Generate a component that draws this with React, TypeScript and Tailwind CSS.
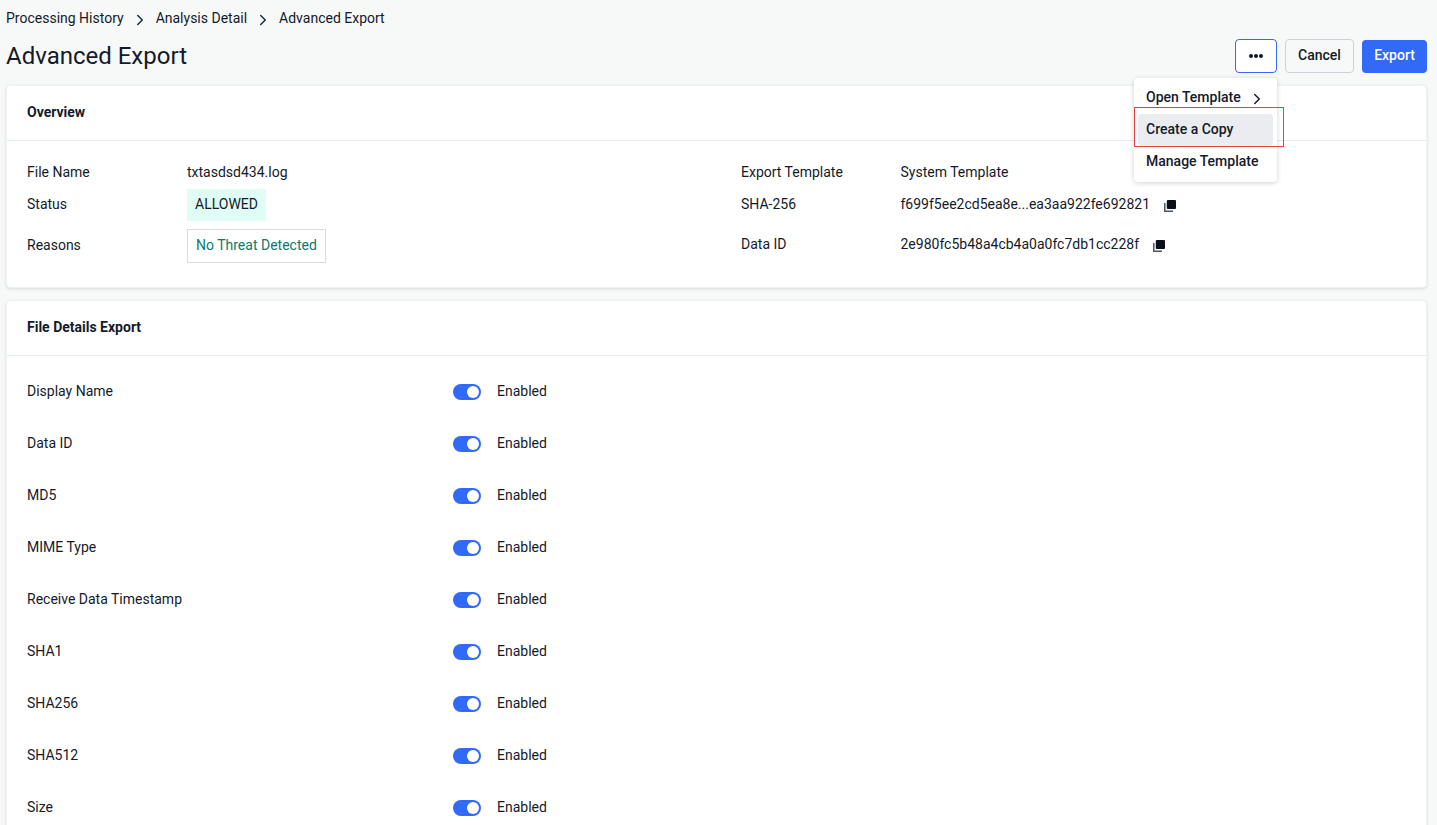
import { ChevronRight } from "lucide-react"

const fields = ["Display Name", "Data ID", "MD5", "MIME Type", "Receive Data Timestamp", "SHA1", "SHA256", "SHA512", "Size"]

function CopyIcon() {
  return (
    <svg width="12" height="12" viewBox="0 0 12 12" className="shrink-0">
      <path d="M0.8 3v8.2H9" fill="none" stroke="#4b5563" strokeWidth="1.5" />
      <rect x="2.8" y="0" width="9.2" height="9" rx="1" fill="#0b0f1a" />
    </svg>
  )
}

function Crumb({ label }: { label: string }) {
  return (
    <>
      <span>{label}</span>
      <ChevronRight size={18} strokeWidth={2} className="mx-[7px] mt-[4px] text-[#1f2937]" />
    </>
  )
}

export default function App() {
  return (
    <div className="relative h-[825px] w-[1437px] overflow-hidden bg-[#f7f9f9] pl-[6px] pr-[10px] text-sm text-[#141a29] [font-family:Roboto,sans-serif]">
      <div className="flex h-[36px] items-center">
        <Crumb label="Processing History" />
        <Crumb label="Analysis Detail" />
        <span>Advanced Export</span>
      </div>

      <div className="flex h-[40px] items-center justify-between">
        <h1 className="text-2xl font-normal">Advanced Export</h1>
        <div className="flex items-center gap-2">
          <button className="flex h-[34px] w-[42px] items-center justify-center rounded border border-[#3269f6] bg-white">
            <span className="flex gap-[1px]">
              <span className="h-[4px] w-[4px] rounded-full bg-[#141a29]" />
              <span className="h-[4px] w-[4px] rounded-full bg-[#141a29]" />
              <span className="h-[4px] w-[4px] rounded-full bg-[#141a29]" />
            </span>
          </button>
          <button className="h-[34px] w-[69px] rounded border border-[#ccd0da] pb-[2px] font-medium">Cancel</button>
          <button className="h-[33px] w-[65px] rounded bg-[#3269f6] pb-[2px] font-medium text-white">Export</button>
        </div>
      </div>

      <section className="mt-[9px] h-[203px] rounded border border-[#eef0f1] bg-white shadow-[0_1px_3px_rgba(20,26,41,0.14)]">
        <div className="flex h-[55px] items-center border-b border-[#e8eaee] px-[20px] pb-[3px] font-bold">Overview</div>
        <div className="flex pl-[20px] pt-[15px]">
          <div className="w-[714px]">
            <div className="flex h-[32px] items-center">
              <span className="w-[160px]">File Name</span>
              <span>txtasdsd434.log</span>
            </div>
            <div className="mt-[1px] flex h-[32px] items-center">
              <span className="mb-[2px] w-[160px]">Status</span>
              <span className="flex h-[32px] items-center bg-[#e0fdf5] px-2 pb-[2px]">ALLOWED</span>
            </div>
            <div className="mt-[8px] flex h-[34px] items-center">
              <span className="mb-[2px] w-[160px]">Reasons</span>
              <span className="flex h-[34px] items-center border border-[#d9dbe0] px-2 pb-[2px] text-[#0d7a6b]">No Threat Detected</span>
            </div>
          </div>
          <div>
            <div className="flex h-[32px] items-center">
              <span className="w-[159.5px]">Export Template</span>
              <span>System Template</span>
            </div>
            <div className="flex h-[32px] items-center">
              <span className="w-[159.5px]">SHA-256</span>
              <span>f699f5ee2cd5ea8e...ea3aa922fe692821</span>
              <span className="ml-[14px] mt-[4px]"><CopyIcon /></span>
            </div>
            <div className="mt-[8px] flex h-[32px] items-center">
              <span className="w-[159.5px]">Data ID</span>
              <span>2e980fc5b48a4cb4a0a0fc7db1cc228f</span>
              <span className="ml-[14px] mt-[3px]"><CopyIcon /></span>
            </div>
          </div>
        </div>
      </section>

      <section className="mt-[12px] rounded border border-[#eef0f1] bg-white pb-[40px] shadow-[0_1px_3px_rgba(20,26,41,0.14)]">
        <div className="flex h-[55px] items-center border-b border-[#e8eaee] px-[20px] pb-[3px] font-bold">File Details Export</div>
        <div className="pl-[20px] pt-[9px]">
          {fields.map((name) => (
            <div key={name} className="flex h-[52px] items-center">
              <span className="w-[426px]">{name}</span>
              <span className="relative mt-[2px] h-[16px] w-[28px] rounded-full bg-[#3269f6]">
                <span className="absolute right-[2px] top-[2px] h-[12px] w-[12px] rounded-full bg-white" />
              </span>
              <span className="ml-[16px]">Enabled</span>
            </div>
          ))}
        </div>
      </section>

      <div className="absolute left-[1134px] top-[78px] z-10 w-[143px] rounded bg-white p-[4px] font-medium shadow-[0_1px_5px_rgba(20,26,41,0.2)]">
        <div className="flex h-[32px] items-center whitespace-nowrap px-2 pb-[2px]">
          <span>Open Template</span>
          <ChevronRight size={18} strokeWidth={2} className="ml-[7px] mt-[3px] shrink-0" />
        </div>
        <div className="flex h-[32px] items-center rounded bg-[#ebecef] px-2 pb-[2px]">Create a Copy</div>
        <div className="flex h-[32px] items-center px-2 pb-[2px]">Manage Template</div>
      </div>
      <div className="absolute left-[1134px] top-[107px] z-20 h-[40px] w-[150px] border border-[#e5404a]" />
    </div>
  )
}
